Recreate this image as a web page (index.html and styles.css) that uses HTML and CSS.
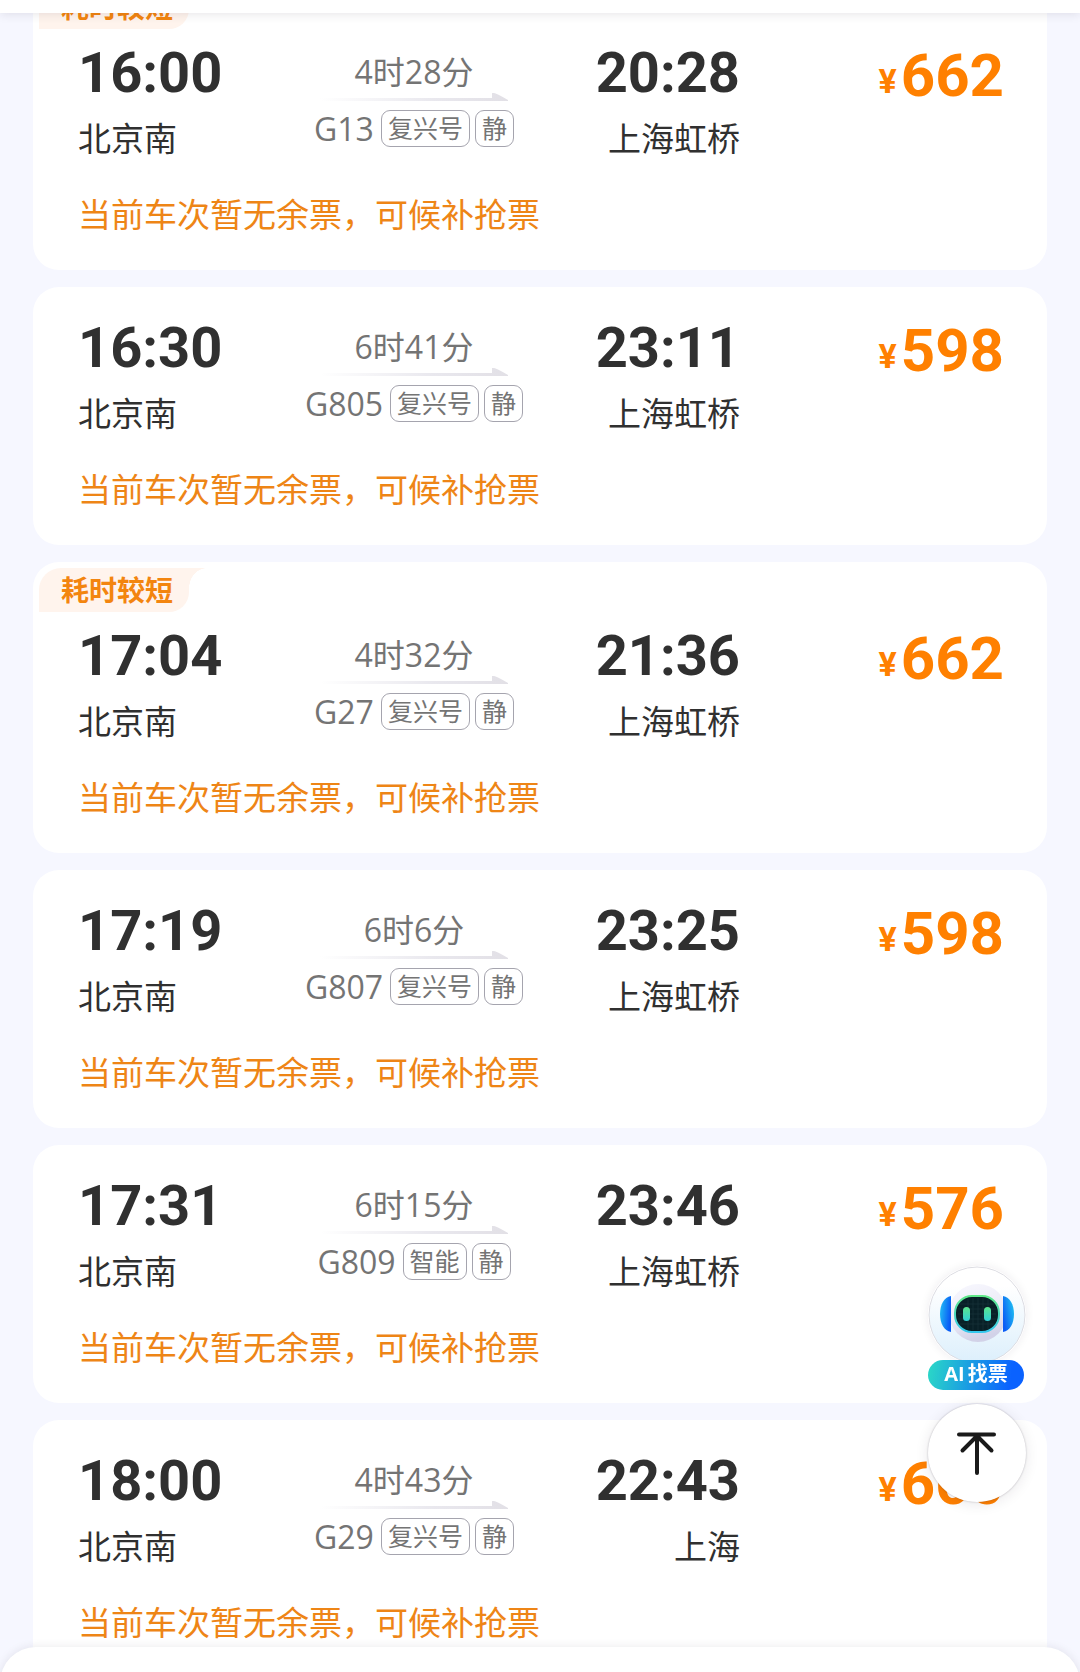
FILE: index.html
```html
<!DOCTYPE html>
<html lang="zh-CN">
<head>
  <meta charset="UTF-8" />
  <meta name="viewport" content="width=device-width, initial-scale=1.0"/>
  <title>北京 - 上海 车次列表</title>
  <link rel="stylesheet" href="styles.css">
</head>
<body>
  <!-- gradient shared by the arrows -->
  <svg class="defs" aria-hidden="true">
    <defs>
      <linearGradient id="arrowFade" x1="0" x2="1" y1="0" y2="0">
        <stop offset="0" stop-color="#e9e8ee" stop-opacity="0"/>
        <stop offset="0.6" stop-color="#e9e8ee"/>
        <stop offset="1" stop-color="#e2e0e6"/>
      </linearGradient>
      <symbol id="arrow" viewBox="0 0 188 8" preserveAspectRatio="none">
        <path d="M0 5H172V0H174Q176 0 188 7V8H0Z" fill="url(#arrowFade)"/>
      </symbol>
    </defs>
  </svg>

  <header class="top-bar"></header>

  <main class="train-list">
    <article class="card has-badge">
      <div class="badge">耗时较短</div>
      <div class="trip">
        <div class="stop">
          <div class="time">16:00</div>
          <div class="station">北京南</div>
        </div>
        <div class="middle">
          <div class="duration">4时28分</div>
          <svg class="arrow"><use href="#arrow"/></svg>
          <div class="train"><span class="number">G13</span><span class="tag">复兴号</span><span class="tag">静</span></div>
        </div>
        <div class="stop arrive">
          <div class="time">20:28</div>
          <div class="station">上海虹桥</div>
        </div>
        <div class="price"><span class="yen">¥</span>662</div>
      </div>
      <p class="status">当前车次暂无余票，可候补抢票</p>
    </article>

    <article class="card">
      <div class="trip">
        <div class="stop">
          <div class="time">16:30</div>
          <div class="station">北京南</div>
        </div>
        <div class="middle">
          <div class="duration">6时41分</div>
          <svg class="arrow"><use href="#arrow"/></svg>
          <div class="train"><span class="number">G805</span><span class="tag">复兴号</span><span class="tag">静</span></div>
        </div>
        <div class="stop arrive">
          <div class="time">23:11</div>
          <div class="station">上海虹桥</div>
        </div>
        <div class="price"><span class="yen">¥</span>598</div>
      </div>
      <p class="status">当前车次暂无余票，可候补抢票</p>
    </article>

    <article class="card has-badge">
      <div class="badge">耗时较短</div>
      <div class="trip">
        <div class="stop">
          <div class="time">17:04</div>
          <div class="station">北京南</div>
        </div>
        <div class="middle">
          <div class="duration">4时32分</div>
          <svg class="arrow"><use href="#arrow"/></svg>
          <div class="train"><span class="number">G27</span><span class="tag">复兴号</span><span class="tag">静</span></div>
        </div>
        <div class="stop arrive">
          <div class="time">21:36</div>
          <div class="station">上海虹桥</div>
        </div>
        <div class="price"><span class="yen">¥</span>662</div>
      </div>
      <p class="status">当前车次暂无余票，可候补抢票</p>
    </article>

    <article class="card">
      <div class="trip">
        <div class="stop">
          <div class="time">17:19</div>
          <div class="station">北京南</div>
        </div>
        <div class="middle">
          <div class="duration">6时6分</div>
          <svg class="arrow"><use href="#arrow"/></svg>
          <div class="train"><span class="number">G807</span><span class="tag">复兴号</span><span class="tag">静</span></div>
        </div>
        <div class="stop arrive">
          <div class="time">23:25</div>
          <div class="station">上海虹桥</div>
        </div>
        <div class="price"><span class="yen">¥</span>598</div>
      </div>
      <p class="status">当前车次暂无余票，可候补抢票</p>
    </article>

    <article class="card">
      <div class="trip">
        <div class="stop">
          <div class="time">17:31</div>
          <div class="station">北京南</div>
        </div>
        <div class="middle">
          <div class="duration">6时15分</div>
          <svg class="arrow"><use href="#arrow"/></svg>
          <div class="train"><span class="number">G809</span><span class="tag">智能</span><span class="tag">静</span></div>
        </div>
        <div class="stop arrive">
          <div class="time">23:46</div>
          <div class="station">上海虹桥</div>
        </div>
        <div class="price"><span class="yen">¥</span>576</div>
      </div>
      <p class="status">当前车次暂无余票，可候补抢票</p>
    </article>

    <article class="card">
      <div class="trip">
        <div class="stop">
          <div class="time">18:00</div>
          <div class="station">北京南</div>
        </div>
        <div class="middle">
          <div class="duration">4时43分</div>
          <svg class="arrow"><use href="#arrow"/></svg>
          <div class="train"><span class="number">G29</span><span class="tag">复兴号</span><span class="tag">静</span></div>
        </div>
        <div class="stop arrive">
          <div class="time">22:43</div>
          <div class="station">上海</div>
        </div>
        <div class="price"><span class="yen">¥</span>660</div>
      </div>
      <p class="status">当前车次暂无余票，可候补抢票</p>
    </article>
  </main>

  <div class="float-tools">
    <button class="ai-btn" type="button">
      <svg class="robot" viewBox="0 0 98 98" aria-hidden="true">
        <defs>
          <linearGradient id="disc" x1="0" x2="0" y1="0" y2="1">
            <stop offset="0.2" stop-color="#ffffff"/>
            <stop offset="1" stop-color="#dceffc"/>
          </linearGradient>
          <linearGradient id="head" x1="0" x2="0.3" y1="0" y2="1">
            <stop offset="0" stop-color="#f8f8fe"/>
            <stop offset="0.6" stop-color="#eceBf7"/>
            <stop offset="1" stop-color="#d2d2e8"/>
          </linearGradient>
          <linearGradient id="earL" x1="0" x2="1" y1="0" y2="0.3">
            <stop offset="0" stop-color="#24c3f5"/>
            <stop offset="1" stop-color="#0a5cf5"/>
          </linearGradient>
          <linearGradient id="earR" x1="1" x2="0" y1="0" y2="0.6">
            <stop offset="0" stop-color="#22cdf2"/>
            <stop offset="1" stop-color="#0a5cf5"/>
          </linearGradient>
          <linearGradient id="rim" x1="0" x2="0" y1="0" y2="1">
            <stop offset="0" stop-color="#5fe888"/>
            <stop offset="1" stop-color="#35c8ee"/>
          </linearGradient>
          <linearGradient id="eye" x1="0" x2="0" y1="0" y2="1">
            <stop offset="0" stop-color="#5ce58c"/>
            <stop offset="1" stop-color="#2fd0d8"/>
          </linearGradient>
        </defs>
        <circle cx="49" cy="49" r="48" fill="url(#disc)" stroke="#dcdce2" stroke-width="1"/>
        <ellipse cx="50" cy="47" rx="29" ry="29" fill="url(#head)"/>
        <path d="M23 30V66C16 65 12 57 12 48S16 31 23 30Z" fill="url(#earL)"/>
        <path d="M75 30V66C82 65 86 57 86 48S82 31 75 30Z" fill="url(#earR)"/>
        <rect x="27" y="30" width="44" height="36" rx="17" fill="#082027" stroke="url(#rim)" stroke-width="2"/>
        <path d="M40 33V63M45 32V64M50 32V64M55 32V64M60 33V63M32 38H66M30 43H68M30 48H68M30 53H68M32 58H66" stroke="#1d3a40" stroke-width="0.500"/>
        <rect x="35" y="41" width="7" height="14" rx="3.500" fill="url(#eye)"/>
        <rect x="56" y="41" width="7" height="14" rx="3.500" fill="url(#eye)"/>
      </svg>
      <span class="ai-label"><span>AI</span><span>找票</span></span>
    </button>
    <button class="top-btn" type="button" aria-label="回到顶部">
      <svg viewBox="0 0 98 98" aria-hidden="true">
        <path d="M31 30.500H66M49 32V69M49 32L34.500 46.500M49 32L63.500 46.500"/>
      </svg>
    </button>
  </div>

  <footer class="bottom-sheet"></footer>
</body>
</html>
```

FILE: styles.css
```css
* {
  box-sizing: border-box;
}

body {
  margin: 0;
  height: 100vh;
  overflow: hidden;
  background: #f6f7ff;
  color: #303030;
  font-family: "Open Sans", "Noto Sans CJK SC", sans-serif;
}

.defs {
  position: absolute;
  width: 0;
  height: 0;
}

.top-bar {
  position: fixed;
  top: 0;
  left: 0;
  right: 0;
  height: 13px;
  background: #fff;
  box-shadow: 0 2px 10px rgba(40, 30, 50, 0.1);
  z-index: 2;
}

/* the list is scrolled a little under the top bar */
.train-list {
  display: flex;
  flex-direction: column;
  gap: 17px;
  margin-top: -21px;
  padding: 0 33px;
}

.card {
  flex: none;
  padding: 31px 0 35px;
  border-radius: 26px;
  background: #fff;
}

.card.has-badge {
  padding-top: 6px;
}

.badge {
  position: relative;
  width: 150px;
  height: 44px;
  margin: 0 0 14px 6px;
  padding-left: 22px;
  border-radius: 22px 0 20px 0;
  background: #fff4ed;
  color: #f3850f;
  font-size: 28px;
  font-weight: 700;
  line-height: 44px;
}

.badge::after {
  content: "";
  position: absolute;
  top: 0;
  left: 100%;
  width: 18px;
  height: 20px;
  background: radial-gradient(ellipse 18px 20px at 100% 100%, transparent 98%, #fff4ed 100%);
}

.trip {
  display: grid;
  grid-template-columns: 226fr 220fr 216fr 264fr;
  padding: 0 43px 0 45px;
}

.arrive {
  text-align: right;
}

.time {
  font-family: Roboto, sans-serif;
  font-size: 56px;
  font-weight: 700;
  line-height: 60px;
}

.station {
  margin-top: 16px;
  font-size: 33px;
  line-height: 40px;
  white-space: nowrap;
}

.middle {
  display: flex;
  flex-direction: column;
  align-items: center;
  padding-top: 9px;
  color: #747474;
}

.duration {
  font-size: 32px;
  line-height: 40px;
}

.arrow {
  width: 188px;
  height: 8px;
  margin-top: 1px;
}

.train {
  display: flex;
  align-items: center;
  gap: 5px;
  margin-top: 9px;
}

.number {
  margin-right: 2px;
  font-size: 32px;
  line-height: 37px;
}

.tag {
  height: 37px;
  padding: 0 6px;
  border: 1px solid #a5a4ae;
  border-radius: 9px;
  font-size: 25px;
  line-height: 35px;
  white-space: nowrap;
}

.price {
  padding-top: 3px;
  color: #ff8000;
  font-family: Roboto, sans-serif;
  font-size: 60px;
  font-weight: 700;
  line-height: 60px;
  text-align: right;
}

.yen {
  margin-right: 4px;
  font-size: 34px;
  line-height: 34px;
  vertical-align: 3px;
}

.status {
  margin: 36px 45px 0;
  color: #ee8516;
  font-size: 33px;
  line-height: 40px;
}

.float-tools {
  position: fixed;
  right: 54px;
  bottom: 170px;
  display: flex;
  flex-direction: column;
  gap: 14px;
  width: 98px;
  z-index: 1;
}

.float-tools button {
  padding: 0;
  border: none;
  font-family: inherit;
  cursor: pointer;
}

.ai-btn {
  display: flex;
  flex-direction: column;
  background: none;
}

.robot {
  width: 98px;
  height: 98px;
  border-radius: 50%;
  box-shadow: 0 0 10px rgba(40, 30, 50, 0.08);
}

.ai-label {
  display: flex;
  justify-content: center;
  gap: 3px;
  width: 96px;
  height: 30px;
  margin-top: -4px;
  border-radius: 15px;
  background: linear-gradient(100deg, #2bd9c6, #0a62ff 85%);
  color: #fff;
  font-size: 20px;
  font-weight: 700;
  line-height: 28px;
  z-index: 1;
}

.top-btn {
  width: 98px;
  height: 98px;
  border-radius: 50%;
  background: #fff;
  box-shadow: 0 0 2px rgba(40, 30, 50, 0.3), 0 2px 14px rgba(40, 30, 50, 0.1);
}

.top-btn svg {
  display: block;
  fill: none;
  stroke: #1a1a1a;
  stroke-width: 4;
  stroke-linecap: round;
}

.bottom-sheet {
  position: fixed;
  left: 0;
  right: 0;
  bottom: -15px;
  height: 40px;
  border-radius: 36px 36px 0 0;
  background: #fff;
  box-shadow: 0 0 10px rgba(40, 30, 50, 0.1);
}
```
